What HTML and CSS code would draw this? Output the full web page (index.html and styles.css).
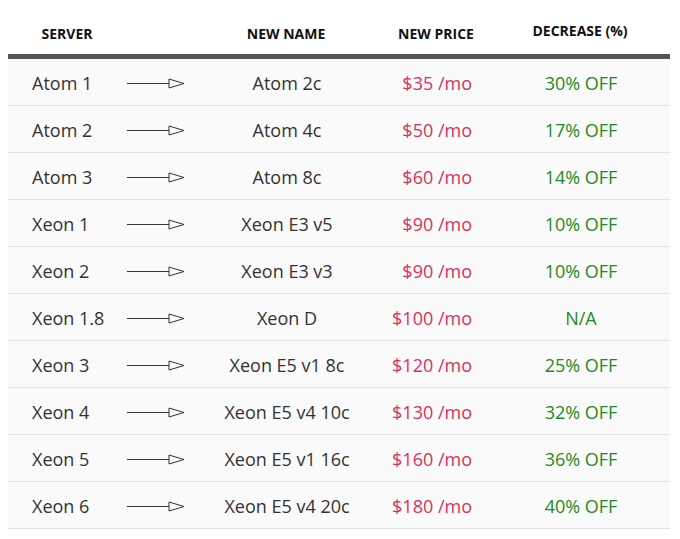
FILE: index.html
```html
<!DOCTYPE html>
<html>
<head>
<meta charset="utf-8">
<link rel="stylesheet" href="styles.css">
</head>
<body>
<div class="table">
  <div class="head">
    <div class="h-server">SERVER</div>
    <div></div>
    <div class="h-center">NEW NAME</div>
    <div class="h-center">NEW PRICE</div>
    <div class="h-center hd-dec">DECREASE (%)</div>
  </div>
  <div class="body">
    <div class="row"><div class="c-server">Atom 1</div><div class="c-arrow"><svg class="arrow" width="58" height="11" viewBox="0 0 58 11"><line x1="0" y1="5.5" x2="42" y2="5.5"/><polygon points="42,1 57,5.5 42,10"/></svg></div><div class="c-name">Atom 2c</div><div class="c-price">$35 /mo</div><div class="c-dec">30% OFF</div></div>
    <div class="row"><div class="c-server">Atom 2</div><div class="c-arrow"><svg class="arrow" width="58" height="11" viewBox="0 0 58 11"><line x1="0" y1="5.5" x2="42" y2="5.5"/><polygon points="42,1 57,5.5 42,10"/></svg></div><div class="c-name">Atom 4c</div><div class="c-price">$50 /mo</div><div class="c-dec">17% OFF</div></div>
    <div class="row"><div class="c-server">Atom 3</div><div class="c-arrow"><svg class="arrow" width="58" height="11" viewBox="0 0 58 11"><line x1="0" y1="5.5" x2="42" y2="5.5"/><polygon points="42,1 57,5.5 42,10"/></svg></div><div class="c-name">Atom 8c</div><div class="c-price">$60 /mo</div><div class="c-dec">14% OFF</div></div>
    <div class="row"><div class="c-server">Xeon 1</div><div class="c-arrow"><svg class="arrow" width="58" height="11" viewBox="0 0 58 11"><line x1="0" y1="5.5" x2="42" y2="5.5"/><polygon points="42,1 57,5.5 42,10"/></svg></div><div class="c-name">Xeon E3 v5</div><div class="c-price">$90 /mo</div><div class="c-dec">10% OFF</div></div>
    <div class="row"><div class="c-server">Xeon 2</div><div class="c-arrow"><svg class="arrow" width="58" height="11" viewBox="0 0 58 11"><line x1="0" y1="5.5" x2="42" y2="5.5"/><polygon points="42,1 57,5.5 42,10"/></svg></div><div class="c-name">Xeon E3 v3</div><div class="c-price">$90 /mo</div><div class="c-dec">10% OFF</div></div>
    <div class="row"><div class="c-server">Xeon 1.8</div><div class="c-arrow"><svg class="arrow" width="58" height="11" viewBox="0 0 58 11"><line x1="0" y1="5.5" x2="42" y2="5.5"/><polygon points="42,1 57,5.5 42,10"/></svg></div><div class="c-name">Xeon D</div><div class="c-price">$100 /mo</div><div class="c-dec">N/A</div></div>
    <div class="row"><div class="c-server">Xeon 3</div><div class="c-arrow"><svg class="arrow" width="58" height="11" viewBox="0 0 58 11"><line x1="0" y1="5.5" x2="42" y2="5.5"/><polygon points="42,1 57,5.5 42,10"/></svg></div><div class="c-name">Xeon E5 v1 8c</div><div class="c-price">$120 /mo</div><div class="c-dec">25% OFF</div></div>
    <div class="row"><div class="c-server">Xeon 4</div><div class="c-arrow"><svg class="arrow" width="58" height="11" viewBox="0 0 58 11"><line x1="0" y1="5.5" x2="42" y2="5.5"/><polygon points="42,1 57,5.5 42,10"/></svg></div><div class="c-name">Xeon E5 v4 10c</div><div class="c-price">$130 /mo</div><div class="c-dec">32% OFF</div></div>
    <div class="row"><div class="c-server">Xeon 5</div><div class="c-arrow"><svg class="arrow" width="58" height="11" viewBox="0 0 58 11"><line x1="0" y1="5.5" x2="42" y2="5.5"/><polygon points="42,1 57,5.5 42,10"/></svg></div><div class="c-name">Xeon E5 v1 16c</div><div class="c-price">$160 /mo</div><div class="c-dec">36% OFF</div></div>
    <div class="row"><div class="c-server">Xeon 6</div><div class="c-arrow"><svg class="arrow" width="58" height="11" viewBox="0 0 58 11"><line x1="0" y1="5.5" x2="42" y2="5.5"/><polygon points="42,1 57,5.5 42,10"/></svg></div><div class="c-name">Xeon E5 v4 20c</div><div class="c-price">$180 /mo</div><div class="c-dec">40% OFF</div></div>
  </div>
</div>
</body>
</html>
```
FILE: styles.css
```css
html, body {
  margin: 0;
  padding: 0;
  background: #ffffff;
}
body {
  font-family: "Open Sans", "Liberation Sans", sans-serif;
  color: #333333;
}
.table {
  width: 662px;
  margin-left: 8px;
}
.head, .row {
  display: grid;
  grid-template-columns: 118px 64px 192px 108px 180px;
  align-items: center;
}
.head {
  height: 59px;
  box-sizing: border-box;
  padding-top: 12px;
  font-weight: 700;
  font-size: 14px;
  color: #111111;
  border-bottom: 5px solid #555555;
}
.h-server { text-align: center; }
.h-center { text-align: center; }
.hd-dec { padding-bottom: 5px; }
.body {
  border-left: 1px solid #e2e2e2;
  border-right: 1px solid #e2e2e2;
}
.row {
  height: 47px;
  box-sizing: border-box;
  padding-top: 2px;
  border-bottom: 1px solid #e2e2e2;
  background: #fafafa;
  font-size: 18px;
  margin-left: -1px;
  margin-right: -1px;
  padding-left: 1px;
  padding-right: 1px;
}
.c-server { padding-left: 23px; }
.c-arrow { display: flex; align-items: center; }
.arrow { display: block; }
.arrow line { stroke: #333333; stroke-width: 1; }
.arrow polygon { fill: none; stroke: #333333; stroke-width: 1; }
.c-name { text-align: center; }
.c-price { text-align: right; padding-right: 19px; color: #d9305f; }
.c-dec { text-align: center; color: #1f8a22; }
```
